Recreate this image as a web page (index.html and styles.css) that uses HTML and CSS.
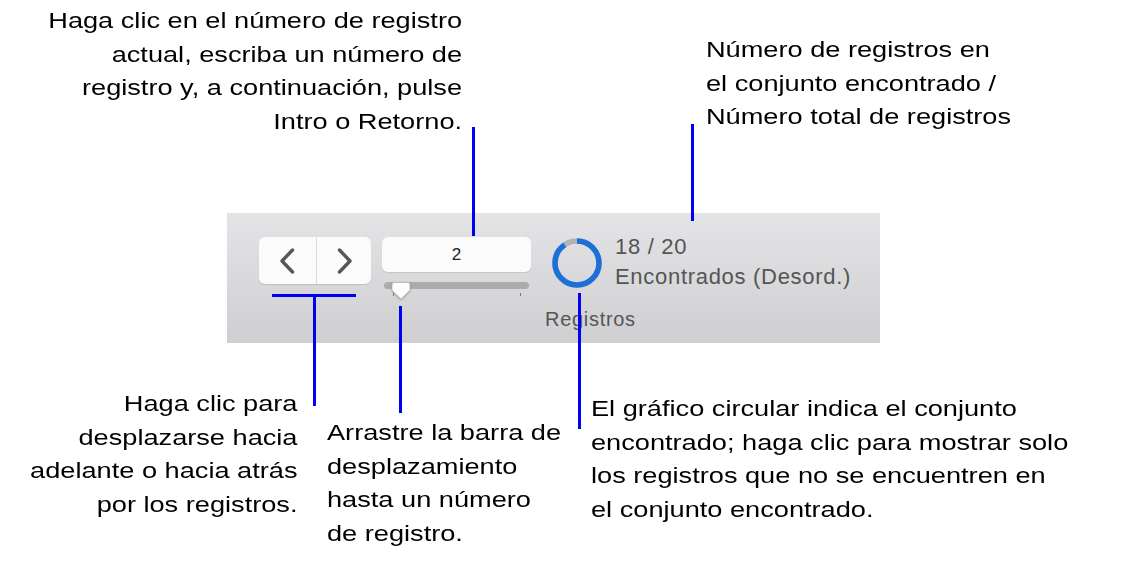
FILE: index.html
```html
<!DOCTYPE html>
<html lang="es">
<head>
<meta charset="utf-8">
<title>Registros</title>
<link rel="stylesheet" href="styles.css">
</head>
<body>
<div class="canvas">
  <div class="toolbar">
    <div class="nav">
      <button class="nav-btn prev" aria-label="Anterior">
        <svg width="18" height="28" viewBox="0 0 18 28"><polyline points="14.5,3 4,14 14.5,25" fill="none" stroke="#565656" stroke-width="3.4" stroke-linecap="round" stroke-linejoin="round"/></svg>
      </button>
      <button class="nav-btn next" aria-label="Siguiente">
        <svg width="18" height="28" viewBox="0 0 18 28"><polyline points="3.5,3 14,14 3.5,25" fill="none" stroke="#565656" stroke-width="3.4" stroke-linecap="round" stroke-linejoin="round"/></svg>
      </button>
    </div>
    <div class="record">
      <div class="field">2</div>
      <div class="slider">
        <div class="track"></div>
        <svg class="thumb" width="22" height="22" viewBox="0 0 22 22">
          <path d="M4 2.5 H18 Q20 2.5 20 4.5 V10 L11 19 L2 10 V4.5 Q2 2.5 4 2.5 Z" fill="#fdfdfd" stroke="#b9b9b9" stroke-width="0.8"/>
        </svg>
        <span class="tick t1"></span>
        <span class="tick t2"></span>
      </div>
    </div>
    <div class="info">
      <div class="info-row">
        <svg class="pie" width="52" height="52" viewBox="0 0 52 52">
          <circle cx="26" cy="26" r="22" fill="none" stroke="#b3b3b3" stroke-width="5.5"/>
          <circle cx="26" cy="26" r="22" fill="none" stroke="#1b71d8" stroke-width="5.5" stroke-dasharray="124.4 200" transform="rotate(-90 26 26)"/>
        </svg>
        <div class="counts">
          <div class="count">18 / 20</div>
          <div class="status">Encontrados (Desord.)</div>
        </div>
      </div>
      <div class="label">Registros</div>
    </div>
  </div>

  <p class="callout c1">Haga clic en el número de registro<br>actual, escriba un número de<br>registro y, a continuación, pulse<br>Intro o Retorno.</p>
  <p class="callout c2">Número de registros en<br>el conjunto encontrado /<br>Número total de registros</p>
  <p class="callout c3">Haga clic para<br>desplazarse hacia<br>adelante o hacia atrás<br>por los registros.</p>
  <p class="callout c4">Arrastre la barra de<br>desplazamiento<br>hasta un número<br>de registro.</p>
  <p class="callout c5">El gráfico circular indica el conjunto<br>encontrado; haga clic para mostrar solo<br>los registros que no se encuentren en<br>el conjunto encontrado.</p>

  <span class="line v l1"></span>
  <span class="line v l2"></span>
  <span class="line h l3h"></span>
  <span class="line v l3v"></span>
  <span class="line v l4"></span>
  <span class="line v l5"></span>
</div>
</body>
</html>
```

FILE: styles.css
```css
* { box-sizing: border-box; }
html, body { margin: 0; padding: 0; background: #ffffff; }
body { font-family: "Liberation Sans", Arial, sans-serif; }

.canvas {
  position: relative;
  width: 1131px;
  height: 569px;
  overflow: hidden;
  background: #ffffff;
}

/* toolbar */
.toolbar {
  position: absolute;
  left: 227px;
  top: 213px;
  width: 653px;
  height: 130px;
  background: linear-gradient(#e4e4e6, #cfcfd1);
  display: flex;
  align-items: flex-start;
  padding: 24px 0 0 32px;
  font-family: "Liberation Sans", Arial, sans-serif;
}

.nav {
  display: flex;
  width: 112px;
  height: 47px;
  background: #fbfbfb;
  border-radius: 6px;
  box-shadow: 0 1px 1px rgba(0,0,0,0.12);
  overflow: hidden;
}
.nav-btn {
  border: 0;
  margin: 0;
  padding: 0;
  background: transparent;
  display: flex;
  align-items: center;
  justify-content: center;
  height: 47px;
}
.nav-btn.prev { width: 58px; border-right: 1px solid #dcdcdc; padding-right: 1px; }
.nav-btn.next { width: 54px; padding-left: 1px; }

.record {
  margin-left: 11px;
  width: 149px;
  display: flex;
  flex-direction: column;
}
.field {
  height: 35px;
  background: #fbfbfb;
  border-radius: 6px;
  box-shadow: 0 1px 1px rgba(0,0,0,0.1);
  text-align: center;
  font-size: 17px;
  line-height: 35px;
  color: #222;
}
.slider {
  position: relative;
  height: 30px;
}
.track {
  margin: 10px 2px 0 2px;
  height: 7px;
  border-radius: 4px;
  background: #acacac;
}
.thumb {
  position: absolute;
  left: 8px;
  top: 8px;
  filter: drop-shadow(0 1px 1px rgba(0,0,0,0.25));
}
.tick {
  position: absolute;
  top: 21px;
  width: 1px;
  height: 3px;
  background: #777;
}
.tick.t1 { left: 11px; }
.tick.t2 { left: 138px; }

.info {
  margin-left: 14px;
  display: flex;
  flex-direction: column;
}
.info-row {
  display: flex;
  align-items: flex-start;
  padding-left: 6px;
}
.pie { display: block; }
.counts {
  margin-left: 12px;
  color: #555;
  font-size: 22px;
  letter-spacing: 0.7px;
}
.count { line-height: 30px; margin-top: -5px; }
.status { line-height: 30px; }
.label {
  margin-top: 17px;
  color: #555;
  font-size: 20px;
  line-height: 20px;
  letter-spacing: 0.7px;
}

/* callouts */
.callout {
  position: absolute;
  margin: 0;
  font-size: 22px;
  line-height: 33.5px;
  color: #000;
  white-space: nowrap;
  transform: scaleX(1.235);
  transform-origin: left top;
}
.c1, .c3 { text-align: right; transform-origin: right top; }
.c1 { right: 669px; top: 4px; }
.c2 { left: 706px; top: 33px; }
.c3 { right: 834px; top: 387px; }
.c4 { left: 327px; top: 416px; }
.c5 { left: 591px; top: 392px; }

/* leader lines */
.line { position: absolute; background: #0000f2; }
.line.v { width: 3px; }
.line.h { height: 3px; }
.l1 { left: 472px; top: 127px; height: 109px; }
.l2 { left: 691px; top: 124px; height: 97px; }
.l3h { left: 272px; top: 294px; width: 84px; }
.l3v { left: 313px; top: 294px; height: 112px; }
.l4 { left: 399px; top: 306px; height: 107px; }
.l5 { left: 578px; top: 293px; height: 136px; }
```
